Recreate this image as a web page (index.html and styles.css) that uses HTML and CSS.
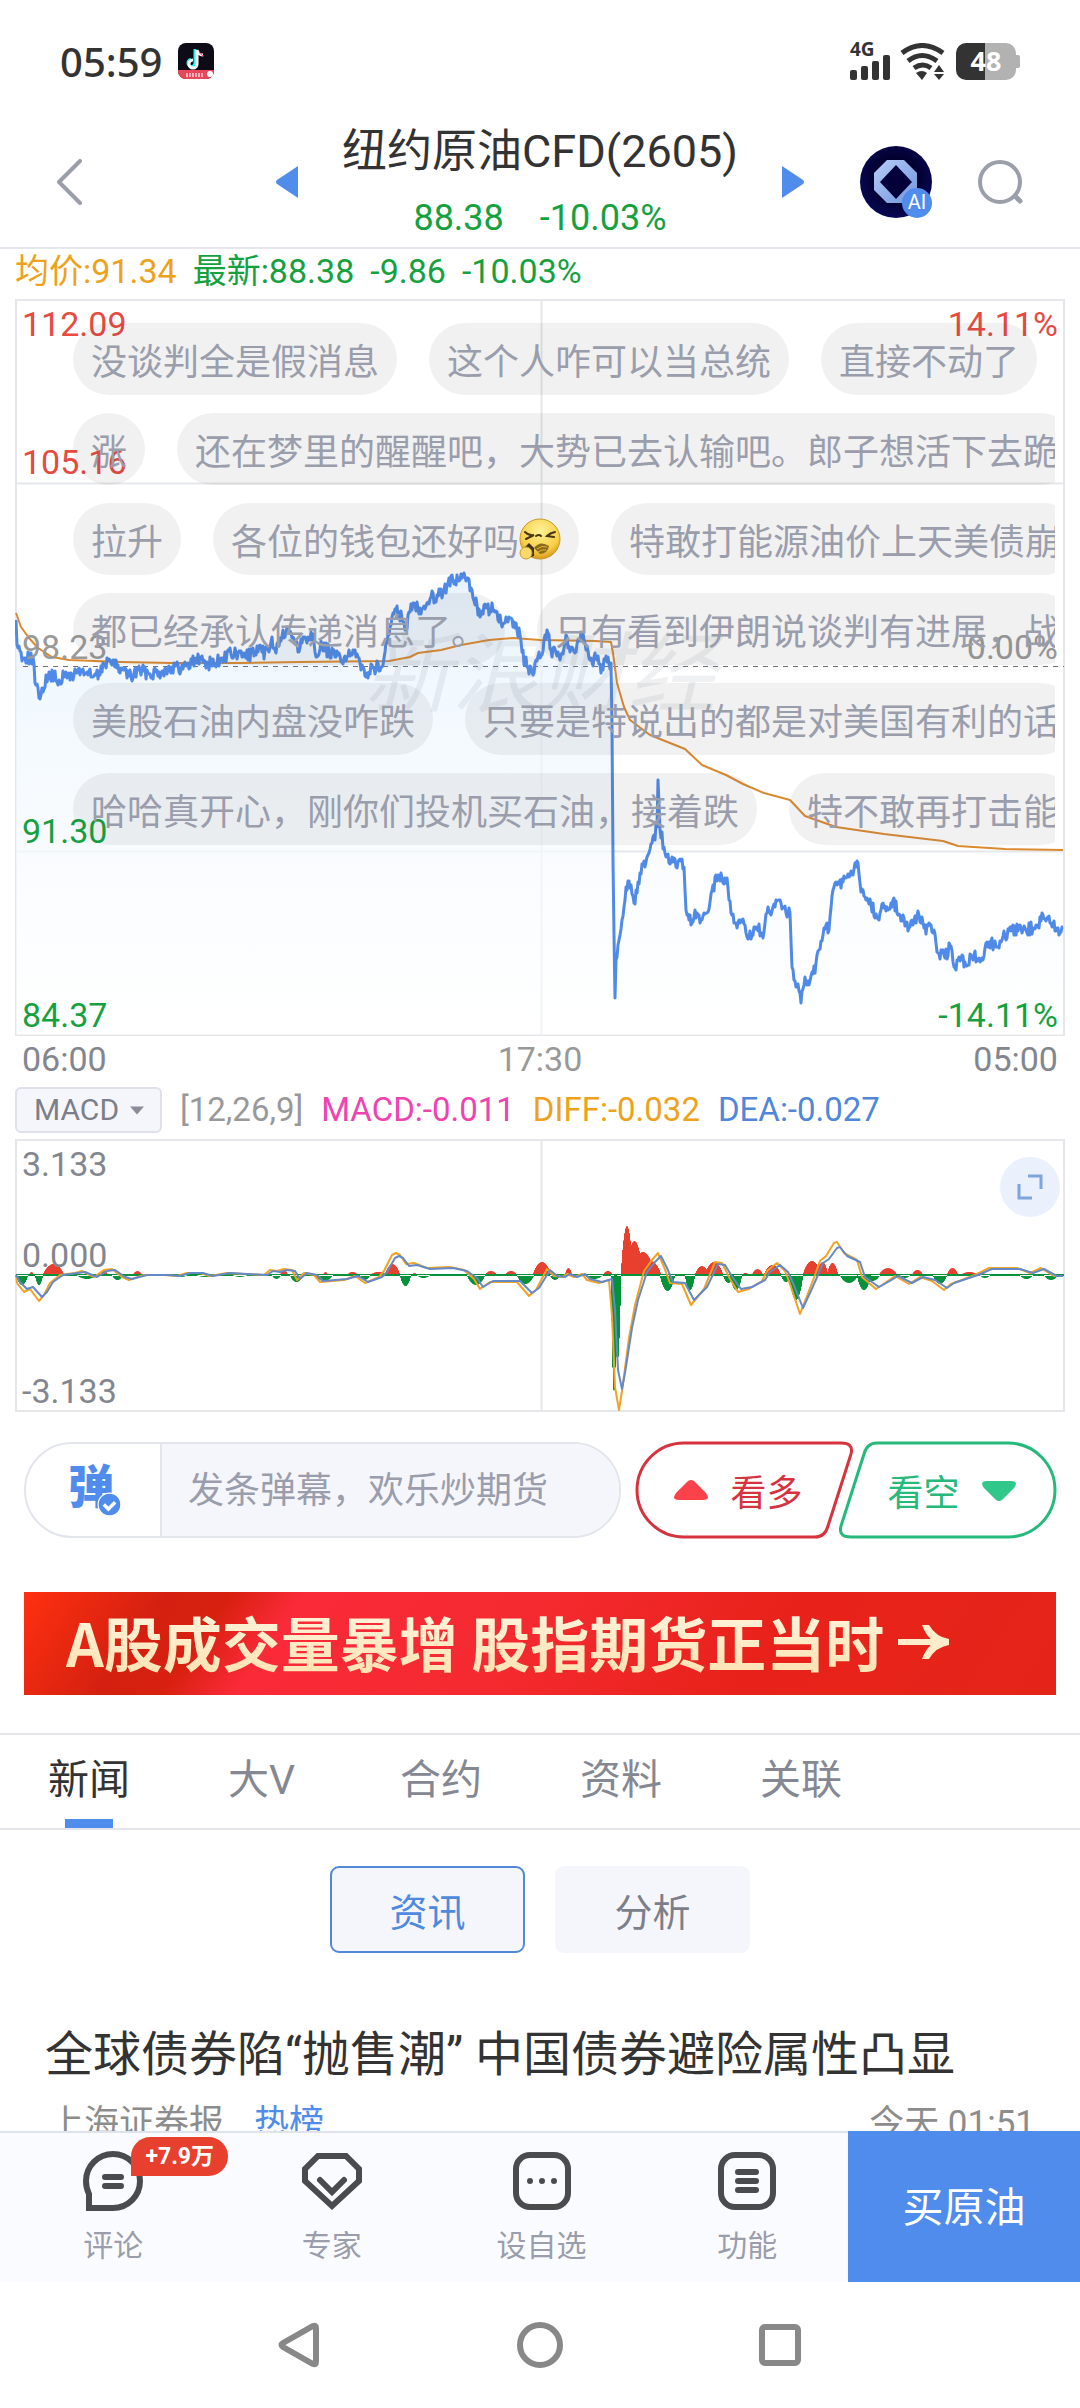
FILE: index.html
```html
<!DOCTYPE html>
<html lang="zh-CN">
<head>
<meta charset="UTF-8">
<meta name="viewport" content="width=device-width, initial-scale=1.0">
<title>纽约原油CFD(2605)</title>
<link rel="stylesheet" href="styles.css">
</head>
<body>
<div class="app">

  <div class="status-bar">
    <div class="status-left">
      <span class="clock">05:59</span>
      <svg class="app-badge" viewBox="0 0 36 36">
        <rect width="36" height="36" rx="8" fill="#0d0b16"/>
        <path d="M17 6v14a3.500 3.500 0 1 1-4-3.500" fill="none" stroke="#25f4ee" stroke-width="3"/>
        <path d="M19 7v14a4 4 0 1 1-4-4M19 7c1 4 3 5 6 5" fill="none" stroke="#fff" stroke-width="3"/>
        <path d="M21 8c1 3 2 4 5 5" fill="none" stroke="#fe2c55" stroke-width="1"/>
        <path d="M0 27h36v1a8 8 0 0 1-8 8H8a8 8 0 0 1-8-8z" fill="#e8485a"/>
        <path d="M9 30v4M12 30v4M15 30v4M18 30v4M21 30v4M24 30v4" stroke="#ffd5d8" stroke-width="1.500"/>
        <circle cx="32" cy="31" r="3" fill="#fff"/>
      </svg>
    </div>
    <div class="status-right">
      <div class="signal">
        <span class="signal-type">4G</span>
        <svg width="40" height="25" viewBox="0 0 40 25" fill="#333">
          <rect x="0" y="15" width="7" height="10" rx="2"/>
          <rect x="11" y="11" width="7" height="14" rx="2"/>
          <rect x="22" y="6" width="7" height="19" rx="2"/>
          <rect x="33" y="0" width="7" height="25" rx="2"/>
        </svg>
      </div>
      <svg width="46" height="37" viewBox="0 0 46 37">
        <path d="M2 10q20-15 41 0M8 18q14-11 29 0M14 25q9-6 17 0" fill="none" stroke="#333" stroke-width="5"/>
        <path d="M16 30q6-4 11 0l-5 7z" fill="#333"/>
        <path d="M34 29l5-7 5 7zM34 31l5 6 5-6z" fill="#333"/>
      </svg>
      <svg class="battery" viewBox="0 0 64 37">
        <path d="M10 0h19v37H10a10 10 0 0 1-10-10V10A10 10 0 0 1 10 0z" fill="#333"/>
        <path d="M29 0h21a10 10 0 0 1 10 10v2h2a2 2 0 0 1 2 2v9a2 2 0 0 1-2 2h-2v2a10 10 0 0 1-10 10H29z" fill="#b2b2b2"/>
        <text x="30" y="28" class="battery-text">48</text>
      </svg>
    </div>
  </div>

  <header class="header">
    <button class="icon-btn back" aria-label="返回">
      <svg width="26" height="46" viewBox="0 0 26 46"><path d="M24 2L3 23l21 21" fill="none" stroke="#9b9faa" stroke-width="4" stroke-linecap="round" stroke-linejoin="round"/></svg>
    </button>
    <div class="contract">
      <button class="icon-btn" aria-label="上一个">
        <svg width="22" height="32" viewBox="0 0 22 32"><path d="M22 0v32L1 18q-2-2 0-4z" fill="#4f8cec"/></svg>
      </button>
      <div class="contract-info">
        <h1>纽约原油CFD(2605)</h1>
        <div class="contract-price"><span>88.38</span><span>-10.03%</span></div>
      </div>
      <button class="icon-btn" aria-label="下一个">
        <svg width="22" height="32" viewBox="0 0 22 32"><path d="M0 0v32l21-14q2-2 0-4z" fill="#4f8cec"/></svg>
      </button>
    </div>
    <div class="header-actions">
      <button class="icon-btn" aria-label="AI">
        <svg width="72" height="72" viewBox="0 0 72 72">
          <defs>
            <radialGradient id="aiBg" cx="0.5" cy="0.45" r="0.6"><stop offset="0.5" stop-color="#02002e"/><stop offset="1" stop-color="#0a0a5e"/></radialGradient>
            <linearGradient id="aiRing" x1="0" y1="0" x2="1" y2="1"><stop offset="0" stop-color="#b7cdf8"/><stop offset="1" stop-color="#6f95dc"/></linearGradient>
          </defs>
          <circle cx="36" cy="36" r="36" fill="url(#aiBg)"/>
          <path d="M27 14h17l13 13v17L44 57H27L14 44V27z" fill="url(#aiRing)"/>
          <path d="M36 19l16 17-16 17-16-17z" fill="#03003a"/>
          <circle cx="57" cy="57" r="15" fill="#4f8cec"/>
          <text x="57" y="63" class="ai-text">AI</text>
        </svg>
      </button>
      <button class="icon-btn" aria-label="搜索">
        <svg width="48" height="48" viewBox="0 0 48 48" fill="none" stroke="#9b9faa"><circle cx="24" cy="24" r="20" stroke-width="4"/><path d="M39 38l5 5" stroke-width="5" stroke-linecap="round"/></svg>
      </button>
    </div>
  </header>

  <main class="content">
    <div class="quote-row">
      <span class="orange">均价:91.34</span>
      <span class="green">最新:88.38</span>
      <span class="green">-9.86</span>
      <span class="green">-10.03%</span>
    </div>

    <section class="chart">
      <svg id="priceChart" class="chart-svg" viewBox="0 0 1050 737">
        <defs>
          <linearGradient id="areaFill" gradientUnits="userSpaceOnUse" x1="0" y1="275" x2="0" y2="737">
            <stop offset="0" stop-color="#dfeefc" stop-opacity="0.7"/>
            <stop offset="0.25" stop-color="#ecf6fe" stop-opacity="0.7"/>
            <stop offset="0.6" stop-color="#f6fafe" stop-opacity="0.7"/>
            <stop offset="1" stop-color="#fff" stop-opacity="0.5"/>
          </linearGradient>
        </defs>
        <path class="grid-line" d="M1 1H1049V736H1ZM1 184.500H1049M1 552.500H1049M526.500 1V736"/>
        <path id="priceArea" fill="url(#areaFill)"/>
        <path class="mid-line" d="M8 367.500H1049"/>
        <path id="avgLine" class="line line-avg"/>
        <path id="priceLine" class="line line-price"/>
      </svg>
      <div class="watermark">新浪财经</div>
      <div class="axis axis-price">
        <div class="axis-row axis-first"><div class="axis-pair red"><span>112.09</span><span>14.11%</span></div><div class="axis-pair red"><span>105.16</span></div></div>
        <div class="axis-row"><div class="axis-pair gray"><span>98.23</span><span>0.00%</span></div></div>
        <div class="axis-row"><div class="axis-pair green"><span>91.30</span></div></div>
        <div class="axis-row"><div class="axis-pair green"><span>84.37</span><span>-14.11%</span></div></div>
      </div>
      <div class="danmu">
        <div class="danmu-row"><span>没谈判全是假消息</span><span>这个人咋可以当总统</span><span>直接不动了</span></div>
        <div class="danmu-row"><span>涨</span><span>还在梦里的醒醒吧，大势已去认输吧。郎子想活下去跪</span></div>
        <div class="danmu-row"><span>拉升</span><span>各位的钱包还好吗<svg class="emoji" viewBox="0 0 42 42">
          <defs><radialGradient id="face" cx="0.5" cy="0.3" r="0.7"><stop offset="0" stop-color="#fff19a"/><stop offset="0.7" stop-color="#f8cf45"/><stop offset="1" stop-color="#d9981c"/></radialGradient></defs>
          <circle cx="21" cy="21" r="20" fill="url(#face)" stroke="#c79a2c"/>
          <path d="M6 14q4 4 9 3l-8 4M36 14q-5 1-8 4l7 1M17 18q3-2 5 0" fill="none" stroke="#4a3614" stroke-width="2" stroke-linecap="round"/>
          <path d="M15 30q6-8 15-2-1 7-9 8z" fill="#8a6a1c"/>
          <path d="M18 31q5-4 10-2M19 34q4-3 8-2" fill="none" stroke="#e5b437" stroke-width="1"/>
          <path d="M5 30l5-5 5 5v8l-6 2z" fill="#3d3326"/>
          <circle cx="7" cy="35" r="6" fill="#fbd968" stroke="#c79a2c"/>
        </svg></span><span>特敢打能源油价上天美债崩</span></div>
        <div class="danmu-row"><span>都已经承认传递消息了。</span><span>只有看到伊朗说谈判有进展，战</span></div>
        <div class="danmu-row"><span>美股石油内盘没咋跌</span><span>只要是特说出的都是对美国有利的话</span></div>
        <div class="danmu-row"><span>哈哈真开心，刚你们投机买石油，接着跌</span><span>特不敢再打击能</span></div>
      </div>
    </section>
    <div class="time-row"><span>06:00</span><span class="gray">17:30</span><span>05:00</span></div>

    <div class="macd-row">
      <div class="select-box">
        <select aria-label="指标"><option>MACD</option><option>KDJ</option><option>RSI</option></select>
        <svg class="caret" viewBox="0 0 16 9"><path d="M0 0h16L8 9z" fill="#8a8d97"/></svg>
      </div>
      <span class="gray">[12,26,9]</span>
      <span class="pink">MACD:-0.011</span>
      <span class="orange">DIFF:-0.032</span>
      <span class="blue">DEA:-0.027</span>
    </div>
    <section class="chart">
      <svg class="chart-svg" viewBox="0 0 1050 273">
        <path class="grid-line" d="M1 1H1049V272H1ZM526.500 1V272"/>
        <path id="barsUp" fill="#e8402e"/>
        <path id="barsDown" fill="#05923a"/>
        <path id="diffLine" class="line line-diff"/>
        <path id="deaLine" class="line line-dea"/>
      </svg>
      <div class="axis axis-macd">
        <div class="axis-row axis-first"><div class="axis-pair"><span>3.133</span></div><div class="axis-pair"><span>0.000</span></div></div>
        <div class="axis-row"><div class="axis-pair"><span>-3.133</span></div></div>
      </div>
      <button class="expand" aria-label="放大">
        <svg width="26" height="26" viewBox="0 0 26 26" fill="none" stroke="#7fa6dc" stroke-width="3"><path d="M11 2h13v13M2 10v14h13"/></svg>
      </button>
    </section>

    <div class="vote-row">
      <div class="danmu-box">
        <button class="danmu-toggle" aria-label="弹幕开关">弹<svg class="danmu-check" viewBox="0 0 22 22"><circle cx="11" cy="11" r="10" fill="#4f8cec" stroke="#fff" stroke-width="1"/><path d="M6 11l4 4 6-6" fill="none" stroke="#fff" stroke-width="3"/></svg></button>
        <input type="text" aria-label="弹幕" placeholder="发条弹幕，欢乐炒期货">
      </div>
      <div class="vote">
        <button class="vote-btn vote-up">
          <svg class="vote-shape" viewBox="0 0 217 96" preserveAspectRatio="none"><path d="M48 1H205Q218 1 215 12L192 84Q189 95 179 95H48A47 47 0 0 1 48 1Z"/></svg>
          <svg width="34" height="21" viewBox="0 0 34 21"><path d="M14 1q3-2 6 0l12 12q5 7-3 7H5q-8 0-3-7z" fill="#fb4149"/></svg>
          看多
        </button>
        <button class="vote-btn vote-down">
          <svg class="vote-shape" viewBox="0 0 217 96" preserveAspectRatio="none"><path d="M169 95H12Q-1 95 2 84L25 12Q28 1 38 1H169A47 47 0 0 1 169 95Z"/></svg>
          看空
          <svg width="34" height="21" viewBox="0 0 34 21"><path d="M14 20q3 2 6 0l12-12q5-7-3-7H5q-8 0-3 7z" fill="#30c88a"/></svg>
        </button>
      </div>
    </div>

    <a class="banner" href="#">
      <span class="banner-text">A股成交量暴增 股指期货正当时</span>
      <svg width="52" height="34" viewBox="0 0 52 34"><path d="M0 17H44" stroke="#ffeccb" stroke-width="6"/><path d="M24 0h7q7 12 20 14v6Q38 22 31 34h-7q4-11 12-17-8-6-12-17z" fill="#ffeccb"/></svg>
    </a>

    <nav class="tabs">
      <button class="tab active">新闻</button>
      <button class="tab">大V</button>
      <button class="tab">合约</button>
      <button class="tab">资料</button>
      <button class="tab">关联</button>
    </nav>
    <div class="sub-tabs">
      <button class="sub-tab active">资讯</button>
      <button class="sub-tab">分析</button>
    </div>

    <article class="news">
      <h2>全球债券陷“抛售潮” 中国债券避险属性凸显</h2>
      <div class="news-meta"><span>上海证券报</span><a href="#">热榜</a><time>今天 01:51</time></div>
    </article>
  </main>

  <footer class="dock">
    <div class="dock-items">
      <button class="dock-item">
        <svg width="60" height="60" viewBox="0 0 60 60" fill="none" stroke="#4a4b4d" stroke-width="6">
          <path d="M6 57V43Q3 37 3 30A27 27 0 1 1 30 57Z"/><path d="M22 26h16M22 35h16" stroke-linecap="round"/>
        </svg>
        评论
        <span class="badge">+7.9万</span>
      </button>
      <button class="dock-item">
        <svg width="60" height="60" viewBox="0 0 60 60" fill="none" stroke="#4a4b4d" stroke-width="6">
          <path d="M16 5H44L57 18V30L30 55L3 30V18Z"/><path d="M18 29l12 12 12-12" stroke-linecap="round"/>
        </svg>
        专家
      </button>
      <button class="dock-item">
        <svg width="60" height="60" viewBox="0 0 60 60" fill="none" stroke="#4a4b4d" stroke-width="6">
          <rect x="4" y="4" width="52" height="52" rx="14"/><path d="M18 30h0M30 30h0M42 30h0" stroke-linecap="round"/>
        </svg>
        设自选
      </button>
      <button class="dock-item">
        <svg width="60" height="60" viewBox="0 0 60 60" fill="none" stroke="#4a4b4d" stroke-width="6">
          <rect x="4" y="4" width="52" height="52" rx="14"/><path d="M21 21h18M21 30h18M21 39h18" stroke-linecap="round"/>
        </svg>
        功能
      </button>
    </div>
    <button class="buy">买原油</button>
  </footer>

  <div class="system-nav">
    <button class="icon-btn" aria-label="后退"><svg width="44" height="48" viewBox="0 0 44 48"><path d="M5 22L35 5Q38 4 38 7V41Q38 44 35 43L5 26Q2 24 5 22Z" fill="none" stroke="#888" stroke-width="6"/></svg></button>
    <button class="icon-btn" aria-label="主页"><svg width="48" height="48" viewBox="0 0 48 48"><circle cx="24" cy="24" r="20" fill="none" stroke="#888" stroke-width="6"/></svg></button>
    <button class="icon-btn" aria-label="最近任务"><svg width="44" height="48" viewBox="0 0 44 48"><rect x="4" y="6" width="36" height="36" rx="3" fill="none" stroke="#888" stroke-width="6"/></svg></button>
  </div>
</div>
<script src="script.js"></script>
</body>
</html>
```
FILE: styles.css
```css
* {
  box-sizing: border-box;
}

body {
  margin: 0;
  font-family: Roboto, "Noto Sans CJK SC", sans-serif;
  background-color: #fff;
  color: #333;
}

button, input, select {
  font-family: inherit;
  border: none;
  background: none;
  padding: 0;
  margin: 0;
}

button {
  cursor: pointer;
}

svg {
  display: block;
  flex-shrink: 0;
}

.app {
  display: flex;
  flex-direction: column;
  height: 100vh;
}

.red { color: #e64a40; }
.green { color: #16a13f; }
.orange { color: #eea21c; }
.gray { color: #999; }
.pink { color: #ee44b0; }
.blue { color: #5087d8; }

/* status bar */
.status-bar {
  display: flex;
  justify-content: space-between;
  align-items: center;
  height: 116px;
  padding: 6px 60px 0;
}

.status-left, .status-right {
  display: flex;
  align-items: center;
}

.status-left { gap: 16px; }
.status-right { gap: 10px; }

.clock {
  font-family: "Noto Sans", sans-serif;
  font-size: 40px;
  font-weight: 500;
}

.app-badge {
  width: 36px;
  height: 36px;
}

.signal {
  display: flex;
  flex-direction: column;
}

.signal-type {
  font-family: "Noto Sans", sans-serif;
  font-size: 19px;
  font-weight: 700;
  line-height: 12px;
}

.battery {
  width: 64px;
  height: 37px;
}

.battery-text {
  font: 700 27px "Noto Sans", sans-serif;
  fill: #fff;
  text-anchor: middle;
}

/* header */
.header {
  display: grid;
  grid-template-columns: 1fr auto 1fr;
  align-items: center;
  height: 133px;
  padding: 0 56px;
  border-bottom: 2px solid #e6e7ec;
}

.contract {
  display: flex;
  align-items: center;
  justify-content: space-between;
  width: 528px;
}

.contract-info {
  text-align: center;
}

h1 {
  margin: 4px 0 0;
  font-size: 45px;
  font-weight: 400;
  line-height: 64px;
}

.contract-price {
  display: flex;
  justify-content: center;
  gap: 36px;
  font-size: 36px;
  line-height: 60px;
  margin-top: 4px;
  color: #16a13f;
}

.header-actions {
  display: flex;
  align-items: center;
  justify-content: flex-end;
  gap: 44px;
}

.ai-text {
  font: 400 20px Roboto, sans-serif;
  fill: #fff;
  text-anchor: middle;
}

/* charts */
.content {
  flex: 1;
  min-height: 0;
  overflow: hidden;
}

.quote-row {
  display: flex;
  gap: 16px;
  height: 50px;
  padding-left: 15px;
  font-size: 34px;
  line-height: 44px;
}

.chart {
  position: relative;
  margin: 0 15px;
}

.chart-svg {
  width: 100%;
}

.grid-line {
  fill: none;
  stroke: #e6e7ea;
  stroke-width: 2;
}

.mid-line {
  stroke: #6f7178;
  stroke-width: 1;
  stroke-dasharray: 5 5;
}

.line {
  fill: none;
  stroke-linejoin: round;
}

.line-price { stroke: #4f8ae8; stroke-width: 3; }
.line-avg { stroke: #dc8a30; stroke-width: 2; }
.line-diff { stroke: #f0a224; stroke-width: 2; }
.line-dea { stroke: #6489c8; stroke-width: 2; }

.watermark {
  position: absolute;
  left: 0;
  right: 0;
  top: 51%;
  transform: translateY(-50%);
  text-align: center;
  font-size: 88px;
  font-style: italic;
  line-height: 1;
  color: rgba(120, 130, 150, 0.12);
}

.axis {
  position: absolute;
  inset: 0;
  display: grid;
  padding: 0 7px;
  font-size: 34px;
  line-height: 42px;
  color: #83868f;
}

.axis-price { grid-template-rows: repeat(4, 1fr); }
.axis-macd { grid-template-rows: repeat(2, 1fr); }

.axis-row {
  display: flex;
  flex-direction: column;
  justify-content: flex-end;
}

.axis-first {
  justify-content: space-between;
  padding-top: 4px;
}

.axis-pair {
  display: flex;
  justify-content: space-between;
}

.danmu {
  position: absolute;
  top: 24px;
  left: 58px;
  right: 10px;
  display: flex;
  flex-direction: column;
  gap: 18px;
  overflow: hidden;
}

.danmu-row {
  display: flex;
  gap: 32px;
}

.danmu-row span {
  display: flex;
  align-items: center;
  flex-shrink: 0;
  height: 72px;
  padding: 0 18px;
  border-radius: 36px;
  background-color: rgba(80, 80, 80, 0.08);
  font-size: 36px;
  white-space: nowrap;
  color: #9a9dab;
}

.emoji {
  width: 42px;
  height: 42px;
}

.time-row {
  display: flex;
  justify-content: space-between;
  padding: 0 22px;
  font-size: 34px;
  line-height: 46px;
  color: #83868f;
}

.macd-row {
  display: flex;
  align-items: center;
  gap: 18px;
  height: 57px;
  padding: 0 15px 2px;
  font-size: 33px;
}

.select-box {
  position: relative;
  width: 147px;
}

.select-box select {
  appearance: none;
  width: 100%;
  height: 46px;
  padding-left: 17px;
  border: 2px solid #dfe1ea;
  border-radius: 6px;
  background-color: #f5f6fb;
  font-size: 30px;
  color: #7c7f89;
}

.caret {
  position: absolute;
  right: 18px;
  top: 19px;
  width: 14px;
  height: 9px;
}

.expand {
  position: absolute;
  top: 18px;
  right: 5px;
  display: flex;
  align-items: center;
  justify-content: center;
  width: 60px;
  height: 60px;
  border-radius: 50%;
  background-color: #eaf1fc;
}

/* danmu input and vote */
.vote-row {
  display: flex;
  gap: 15px;
  margin: 30px 24px 54px;
}

.danmu-box {
  display: flex;
  flex: 1;
  height: 96px;
  border: 2px solid #e3e5ed;
  border-radius: 48px;
  overflow: hidden;
}

.danmu-toggle {
  position: relative;
  width: 136px;
  padding: 0 4px 6px 0;
  border-right: 2px solid #e3e5ed;
  font-size: 46px;
  font-weight: 900;
  line-height: 1;
  color: #4f8cec;
}

.danmu-check {
  position: absolute;
  left: 71px;
  top: 48px;
  width: 25px;
  height: 25px;
}

.danmu-box input {
  flex: 1;
  min-width: 0;
  padding: 2px 26px 0;
  background-color: #f5f6fb;
  font-size: 36px;
}

.danmu-box input::placeholder {
  color: #9a9dab;
}

.vote {
  display: flex;
  width: 420px;
}

.vote-btn {
  position: relative;
  display: flex;
  align-items: center;
  justify-content: center;
  gap: 22px;
  width: 217px;
  height: 96px;
  font-size: 36px;
}

.vote-up {
  padding-right: 12px;
  color: #d6333f;
}

.vote-down {
  margin-left: -14px;
  padding-left: 8px;
  color: #26b97c;
}

.vote-shape {
  position: absolute;
  inset: 0;
  width: 100%;
  height: 100%;
  overflow: visible;
  fill: none;
  stroke: currentColor;
  stroke-width: 3;
}

/* banner */
.banner {
  display: flex;
  align-items: center;
  gap: 14px;
  height: 103px;
  margin: 0 24px 38px;
  padding: 0 0 4px 42px;
  background: linear-gradient(125deg, #ff3010 0, #d42010 120px, #d8200f 170px, #fa2a38 230px, #f52a30 420px, #e8221a 640px, #e52419 100%);
  text-decoration: none;
}

.banner-text {
  font-family: "Noto Sans CJK SC", sans-serif;
  font-size: 59px;
  font-weight: 700;
  line-height: 80px;
  white-space: nowrap;
  color: transparent;
  background: linear-gradient(#fff6e0, #ffe0ae);
  background-clip: text;
  -webkit-background-clip: text;
}

/* tabs */
.tabs {
  display: flex;
  gap: 98px;
  height: 97px;
  padding: 0 48px;
  border-top: 2px solid #e3e5ea;
  border-bottom: 2px solid #e3e5ea;
}

.tab {
  min-width: 74px;
  padding-bottom: 12px;
  font-size: 41px;
  text-align: left;
  color: #858893;
}

.tab.active {
  color: #333;
  background: linear-gradient(#4f8cec, #4f8cec) center bottom / 48px 9px no-repeat;
}

.sub-tabs {
  display: flex;
  justify-content: center;
  gap: 30px;
  padding: 36px 0 64px;
}

.sub-tab {
  width: 195px;
  height: 87px;
  border-radius: 9px;
  background-color: #f5f6fb;
  font-size: 38px;
  color: #7c7f89;
}

.sub-tab.active {
  border: 2px solid #5089d8;
  color: #4f8ae0;
}

/* news */
.news {
  padding: 0 45px;
}

h2 {
  margin: 0;
  font-size: 48px;
  font-weight: 400;
  line-height: 76px;
  white-space: nowrap;
}

.news-meta {
  display: flex;
  gap: 30px;
  margin-top: 8px;
  padding-left: 4px;
  font-size: 35px;
  line-height: 46px;
  color: #8c8c8c;
}

.news-meta a {
  color: #4f8cec;
  text-decoration: none;
}

.news-meta time {
  margin-left: auto;
}

/* bottom bar */
.dock {
  display: flex;
  height: 151px;
  background-color: #fafbfe;
}

.dock-items {
  display: grid;
  grid-template-columns: 27fr 25fr 25fr 24fr;
  flex: 1;
  border-top: 2px solid #dfe3ec;
}

.dock-item {
  position: relative;
  display: flex;
  flex-direction: column;
  align-items: center;
  gap: 10px;
  padding-top: 18px;
  font-size: 30px;
  color: #9a9dab;
}

.badge {
  position: absolute;
  left: 58%;
  top: 4px;
  padding: 0 14px;
  border-radius: 20px 20px 20px 0;
  background-color: #e8402e;
  font-size: 23px;
  font-weight: 700;
  line-height: 39px;
  white-space: nowrap;
  color: #fff;
}

.buy {
  width: 232px;
  padding-bottom: 6px;
  background-color: #4f8cec;
  font-size: 41px;
  color: #fff;
}

.system-nav {
  display: flex;
  justify-content: center;
  align-items: center;
  gap: 194px;
  height: 126px;
}
```
FILE: script.js
```js
// chart points, [x, y] in the viewBox of each chart
const price = [[1,321],[2,346],[6,353],[9,359],[18,358],[20,384],[24,399],[26,396],[27,389],[35,376],[44,381],[49,378],[57,376],[66,371],[71,374],[78,378],[85,376],[88,364],[95,361],[102,369],[109,371],[116,378],[123,371],[133,374],[147,372],[157,368],[166,371],[173,364],[186,360],[193,364],[200,365],[207,359],[216,355],[230,357],[243,353],[254,353],[257,338],[261,354],[265,339],[271,334],[278,338],[282,343],[284,353],[288,338],[298,335],[300,353],[307,348],[314,353],[321,358],[329,359],[336,355],[341,358],[347,366],[352,374],[359,369],[366,368],[369,359],[372,344],[375,328],[378,314],[384,313],[388,323],[391,329],[395,313],[399,304],[405,309],[412,304],[416,298],[422,296],[429,291],[433,284],[440,282],[450,278],[457,291],[462,306],[465,318],[471,309],[479,311],[483,321],[490,324],[493,323],[502,331],[505,336],[507,353],[512,368],[517,373],[521,361],[524,353],[527,356],[530,336],[534,336],[536,351],[546,356],[552,338],[555,353],[559,353],[563,341],[568,334],[571,351],[575,361],[582,361],[586,374],[590,361],[596,364],[597,428],[598,561],[600,699],[601,661],[604,641],[607,621],[609,608],[611,588],[615,589],[619,604],[623,583],[628,566],[632,558],[637,544],[642,528],[643,481],[645,531],[649,548],[654,564],[663,563],[669,568],[671,611],[676,626],[682,614],[685,624],[692,614],[697,591],[703,576],[708,584],[712,579],[716,614],[723,624],[726,621],[732,638],[742,628],[748,639],[752,614],[756,616],[764,601],[768,609],[775,614],[777,668],[782,688],[786,704],[790,678],[794,686],[797,673],[800,674],[804,651],[809,629],[814,631],[818,591],[821,583],[826,589],[830,579],[837,573],[843,564],[845,584],[850,598],[856,606],[862,618],[869,609],[878,601],[885,616],[895,628],[904,616],[909,629],[919,631],[923,654],[930,659],[935,646],[941,671],[944,658],[950,663],[957,658],[967,659],[974,643],[983,648],[990,638],[1004,628],[1011,631],[1023,626],[1028,616],[1035,624],[1042,629],[1048,628]];

const average = [[1,314],[6,328],[14,339],[23,349],[37,358],[54,361],[106,363],[157,364],[226,364],[285,363],[374,362],[395,358],[403,354],[426,351],[446,346],[474,341],[498,339],[525,341],[580,342],[596,343],[598,354],[602,384],[609,408],[615,421],[635,436],[670,450],[687,466],[711,476],[728,485],[749,494],[775,501],[790,517],[821,528],[869,535],[928,542],[943,547],[990,550],[1048,551]];

const dea = [[1,136],[5,143],[12,150],[18,148],[27,158],[32,153],[38,143],[48,136],[63,134],[70,133],[82,138],[92,132],[100,131],[110,138],[117,140],[132,136],[152,136],[165,137],[175,134],[188,134],[198,137],[215,134],[232,135],[252,136],[258,132],[265,133],[272,131],[280,132],[285,140],[292,134],[302,136],[308,142],[332,140],[343,137],[353,143],[367,138],[372,133],[380,119],[384,117],[388,119],[394,127],[402,126],[415,130],[438,129],[452,132],[462,139],[468,148],[478,142],[505,142],[517,154],[524,149],[535,131],[542,137],[550,138],[555,135],[562,138],[570,135],[575,140],[587,143],[597,140],[600,171],[603,231],[607,250],[610,234],[617,189],[623,161],[632,133],[640,123],[646,117],[652,129],[658,143],[670,144],[679,161],[692,148],[703,125],[710,126],[718,139],[726,150],[737,148],[750,141],[755,133],[765,126],[773,133],[778,144],[788,169],[795,154],[803,136],[808,124],[814,120],[822,109],[825,108],[832,117],[845,123],[850,138],[864,148],[873,143],[883,137],[897,144],[908,138],[920,141],[932,149],[939,144],[963,136],[977,130],[1005,130],[1018,134],[1029,130],[1042,137],[1048,137]];

// histogram groups: [from, to, height]
const bars = [[1,13,-10],[14,19,3],[20,28,-10],[28,49,11],[62,82,-4],[85,93,4],[97,108,-5],[118,127,4],[162,172,-2],[182,198,-2],[212,218,3],[218,232,-2],[257,266,-4],[265,273,5],[275,288,-7],[288,293,3],[300,318,-6],[308,313,3],[332,343,3],[345,355,-5],[355,372,3],[370,385,11],[385,396,-11],[397,402,2],[402,415,-3],[452,470,-10],[470,482,4],[490,502,4],[502,519,-9],[518,536,13],[535,545,-5],[550,557,7],[570,588,-4],[588,598,4],[596,602,-118],[599,606,-88],[606,618,49],[611,628,34],[616,640,23],[626,646,14],[645,660,-16],[663,670,1],[670,680,-15],[680,694,9],[690,708,13],[708,719,-8],[715,727,-15],[727,734,2],[737,748,6],[749,766,10],[766,776,-7],[774,788,-25],[788,806,14],[802,813,13],[812,823,12],[825,843,-8],[842,856,-15],[850,865,-6],[864,882,7],[885,895,-3],[897,908,5],[918,932,-9],[932,943,7],[946,963,3],[965,975,-3],[965,971,2],[1005,1018,-4],[1029,1043,-5]];

const ZERO = 136;

function toPath(points) {
  return "M" + points.map(p => p[0] + " " + p[1]).join("L");
}

// fill the gaps between the points with minute ticks
function addTicks(points) {
  let seed = 7;
  const out = [points[0]];
  for (let i = 1; i < points.length; i++) {
    const [x0, y0] = points[i - 1];
    const [x1, y1] = points[i];
    for (let x = x0 + 1; x < x1; x++) {
      seed = (seed * 1103515245 + 12345) % 2147483648;
      const noise = (seed / 2147483648 - 0.5) * 14;
      out.push([x, Math.round(y0 + (y1 - y0) * (x - x0) / (x1 - x0) + noise)]);
    }
    out.push([x1, y1]);
  }
  return out;
}

function barPath(groups) {
  let d = "";
  groups.forEach(([from, to, h]) => {
    for (let x = from; x < to; x++) {
      const t = (x - from + 0.5) / (to - from);
      const y = ZERO - h * Math.pow(Math.sin(Math.PI * t), 0.7);
      d += `M${x} ${ZERO}V${y.toFixed(1)}H${x + 1}V${ZERO}Z`;
    }
  });
  return d;
}

function setPath(id, d) {
  document.getElementById(id).setAttribute("d", d);
}

const ticks = addTicks(price);
setPath("priceLine", toPath(ticks));
setPath("priceArea", toPath(ticks) + "L1048 736L1 736Z");
setPath("avgLine", toPath(average));

const diff = dea.map(([x, y]) => [Math.max(1, x - 3), Math.round(ZERO + (y - ZERO) * 1.18)]);
setPath("deaLine", toPath(dea));
setPath("diffLine", toPath(diff));
setPath("barsUp", barPath(bars.filter(b => b[2] > 0)));
setPath("barsDown", barPath(bars.filter(b => b[2] < 0)) + `M1 ${ZERO - 1}H1049V${ZERO + 1}H1Z`);
```
